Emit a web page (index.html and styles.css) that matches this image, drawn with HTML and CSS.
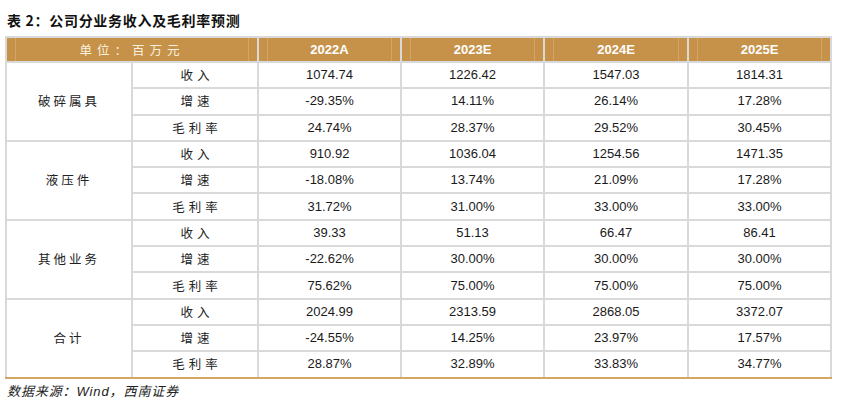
FILE: index.html
```html
<!DOCTYPE html>
<html lang="zh">
<head>
<meta charset="utf-8">
<link rel="stylesheet" href="styles.css">
</head>
<body>
<div class="page">
  <h1 class="title">表 2：公司分业务收入及毛利率预测</h1>
  <table class="data">
    <colgroup>
      <col class="c1"><col class="c2"><col class="c3"><col class="c4"><col class="c5"><col class="c6">
    </colgroup>
    <thead>
      <tr>
        <th colspan="2" class="unit"><span>单位：百万元</span></th>
        <th><span>2022A</span></th>
        <th><span>2023E</span></th>
        <th><span>2024E</span></th>
        <th><span>2025E</span></th>
      </tr>
    </thead>
    <tbody>
      <tr><td rowspan="3" class="seg">破碎属具</td><td class="lbl">收入</td><td>1074.74</td><td>1226.42</td><td>1547.03</td><td>1814.31</td></tr>
      <tr><td class="lbl">增速</td><td>-29.35%</td><td>14.11%</td><td>26.14%</td><td>17.28%</td></tr>
      <tr><td class="lbl">毛利率</td><td>24.74%</td><td>28.37%</td><td>29.52%</td><td>30.45%</td></tr>
      <tr><td rowspan="3" class="seg">液压件</td><td class="lbl">收入</td><td>910.92</td><td>1036.04</td><td>1254.56</td><td>1471.35</td></tr>
      <tr><td class="lbl">增速</td><td>-18.08%</td><td>13.74%</td><td>21.09%</td><td>17.28%</td></tr>
      <tr><td class="lbl">毛利率</td><td>31.72%</td><td>31.00%</td><td>33.00%</td><td>33.00%</td></tr>
      <tr><td rowspan="3" class="seg">其他业务</td><td class="lbl">收入</td><td>39.33</td><td>51.13</td><td>66.47</td><td>86.41</td></tr>
      <tr><td class="lbl">增速</td><td>-22.62%</td><td>30.00%</td><td>30.00%</td><td>30.00%</td></tr>
      <tr><td class="lbl">毛利率</td><td>75.62%</td><td>75.00%</td><td>75.00%</td><td>75.00%</td></tr>
      <tr><td rowspan="3" class="seg">合计</td><td class="lbl">收入</td><td>2024.99</td><td>2313.59</td><td>2868.05</td><td>3372.07</td></tr>
      <tr><td class="lbl">增速</td><td>-24.55%</td><td>14.25%</td><td>23.97%</td><td>17.57%</td></tr>
      <tr class="last"><td class="lbl">毛利率</td><td>28.87%</td><td>32.89%</td><td>33.83%</td><td>34.77%</td></tr>
    </tbody>
  </table>
  <p class="source">数据来源：Wind，西南证券</p>
</div>
</body>
</html>
```

FILE: styles.css
```css
html, body {
  margin: 0;
  padding: 0;
  background: #ffffff;
}

.page {
  padding: 11px 0 0 5px;
  width: 825px;
  font-family: "Liberation Sans", "Noto Sans CJK SC", sans-serif;
  color: #111111;
}

.title {
  margin: 0 0 7px 2px;
  font-family: "Noto Sans CJK SC", sans-serif;
  font-size: 14px;
  font-weight: 700;
  line-height: 18px;
  letter-spacing: 0.7px;
  color: #111111;
}

.data {
  border-collapse: collapse;
  table-layout: fixed;
  width: 825px;
  font-size: 13px;
}

.c1 { width: 126px; }
.c2 { width: 126px; }
.c3 { width: 143px; }
.c4 { width: 143px; }
.c5 { width: 144px; }
.c6 { width: 143px; }

.data th,
.data td {
  border: 2px solid #d9d9d9;
  padding: 0;
  text-align: center;
  vertical-align: middle;
}

.data thead th {
  height: 23px;
  background-color: #c6924a;
  background-image:
    linear-gradient(to right, transparent 8px, #d3a566 8px, #d3a566 9px, transparent 9px),
    linear-gradient(to left, transparent 8px, #d3a566 8px, #d3a566 9px, transparent 9px);
  color: #ffffff;
  font-weight: 700;
  font-size: 13px;
  line-height: 16px;
}

.data thead th.unit {
  font-family: "Noto Sans CJK SC", sans-serif;
  font-weight: 400;
  font-size: 12.5px;
  letter-spacing: 5px;
  color: #fbf1df;
}

.data tbody td {
  height: 24.3px;
  line-height: 16px;
  color: #1a1a1a;
}

.data td.seg,
.data td.lbl {
  font-family: "Noto Sans CJK SC", sans-serif;
  font-size: 12.5px;
  font-weight: 400;
  color: #222222;
}

.data td.seg {
  letter-spacing: 3px;
}

.data td.lbl {
  letter-spacing: 4px;
  text-indent: 4px;
}

.data tr.last td {
  border-bottom-color: #d3a566;
}

.data tbody tr:nth-child(10) td.seg {
  border-bottom-color: #d3a566;
}

.source {
  margin: 5px 0 0 2px;
  font-family: "Liberation Sans", "Noto Sans CJK SC", sans-serif;
  font-style: italic;
  font-size: 13px;
  line-height: 16px;
  color: #222222;
  letter-spacing: 0.9px;
}
```
